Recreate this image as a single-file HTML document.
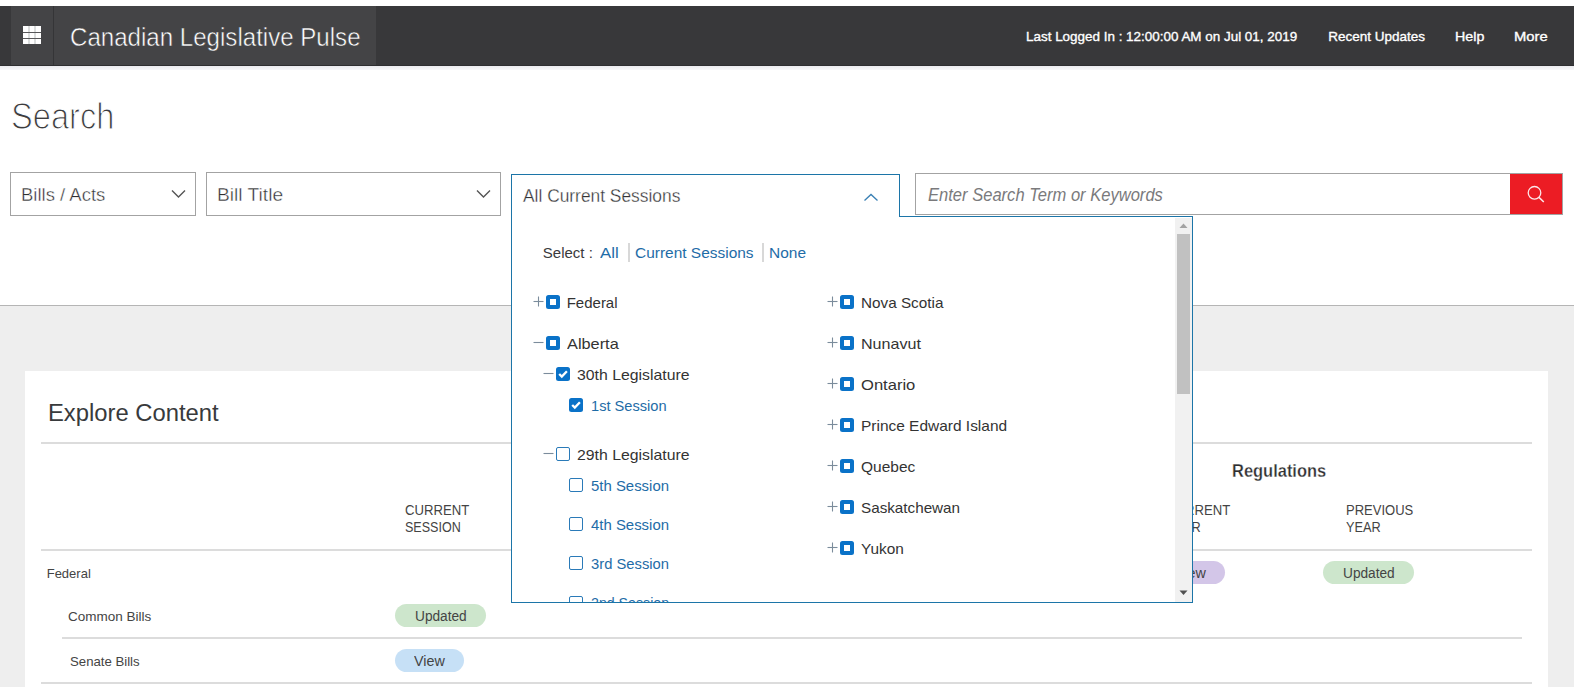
<!DOCTYPE html>
<html><head><meta charset="utf-8"><style>
html,body{margin:0;padding:0;}
body{width:1574px;height:687px;position:relative;overflow:hidden;background:#fff;font-family:"Liberation Sans",sans-serif;}
.t{position:absolute;white-space:nowrap;}
.b{position:absolute;}
</style></head><body>
<div class="b" style="left:0px;top:6px;width:1574px;height:60px;background:#38383a"></div>
<div class="b" style="left:11px;top:6px;width:42px;height:60px;background:#444446"></div>
<div class="b" style="left:53px;top:6px;width:1px;height:60px;background:#353537"></div>
<div class="b" style="left:54px;top:6px;width:322px;height:60px;background:#444446"></div>
<div class="b" style="left:0px;top:65px;width:1574px;height:1px;background:#2f2f31"></div>
<div class="b" style="left:0px;top:66px;width:1574px;height:4px;background:linear-gradient(#ebebef,#f8f8fa)"></div>
<svg class="b" style="left:23px;top:26px" width="18" height="18" viewBox="0 0 18 18"><rect width="18" height="18" fill="#fff"/><rect x="5.5" y="0" width="1" height="18" fill="#b9bdbd"/><rect x="11.5" y="0" width="1" height="18" fill="#b9bdbd"/><rect x="0" y="6" width="18" height="1" fill="#58585a"/><rect x="0" y="12" width="18" height="1" fill="#58585a"/></svg>
<div class="t" style="left:69.80px;top:22.43px;font-size:25px;line-height:30px;color:#fff;font-weight:normal;font-style:normal;transform:scaleX(0.9634);transform-origin:0.00px 0;-webkit-text-stroke:0.5px #444446;">Canadian Legislative Pulse</div>
<div class="t" style="left:1025.50px;top:29.42px;font-size:13.5px;line-height:16px;color:#fff;font-weight:normal;font-style:normal;transform:scaleX(0.9952);transform-origin:0.00px 0;-webkit-text-stroke:0.35px #fff;">Last Logged In : 12:00:00 AM on Jul 01, 2019</div>
<div class="t" style="left:1328.20px;top:29.42px;font-size:13.5px;line-height:16px;color:#fff;font-weight:normal;font-style:normal;-webkit-text-stroke:0.35px #fff;">Recent Updates</div>
<div class="t" style="left:1455.00px;top:29.42px;font-size:13.5px;line-height:16px;color:#fff;font-weight:normal;font-style:normal;transform:scaleX(1.0559);transform-origin:0.00px 0;-webkit-text-stroke:0.35px #fff;">Help</div>
<div class="t" style="left:1514.20px;top:29.42px;font-size:13.5px;line-height:16px;color:#fff;font-weight:normal;font-style:normal;transform:scaleX(1.0927);transform-origin:0.00px 0;-webkit-text-stroke:0.35px #fff;">More</div>
<div class="t" style="left:11.00px;top:95.12px;font-size:36px;line-height:43px;color:#3c3c3e;font-weight:normal;font-style:normal;transform:scaleX(0.9060);transform-origin:0.00px 0;-webkit-text-stroke:1.1px #fff;">Search</div>
<div class="b" style="left:10px;top:172px;width:186px;height:44px;border:1px solid #a3a3a3;box-sizing:border-box;background:#fff"></div>
<div class="t" style="left:20.60px;top:183.86px;font-size:18px;line-height:22px;color:#2e2e30;font-weight:normal;font-style:normal;transform:scaleX(1.0280);transform-origin:0.00px 0;-webkit-text-stroke:0.4px #fff;">Bills / Acts</div>
<svg class="b" style="left:171px;top:189px" width="16" height="10" viewBox="0 0 16 10"><polyline points="1,1.5 7.5,8 14,1.5" fill="none" stroke="#555" stroke-width="1.4"/></svg>
<div class="b" style="left:206px;top:172px;width:295px;height:44px;border:1px solid #a3a3a3;box-sizing:border-box;background:#fff"></div>
<div class="t" style="left:217.00px;top:183.86px;font-size:18px;line-height:22px;color:#2e2e30;font-weight:normal;font-style:normal;transform:scaleX(1.0661);transform-origin:0.00px 0;-webkit-text-stroke:0.4px #fff;">Bill Title</div>
<svg class="b" style="left:476px;top:189px" width="16" height="10" viewBox="0 0 16 10"><polyline points="1,1.5 7.5,8 14,1.5" fill="none" stroke="#555" stroke-width="1.4"/></svg>
<div class="b" style="left:915px;top:173px;width:648px;height:42px;border:1px solid #a3a3a3;box-sizing:border-box;background:#fff"></div>
<div class="t" style="left:927.90px;top:184.53px;font-size:17.5px;line-height:21px;color:#7a7a7c;font-weight:normal;font-style:italic;transform:scaleX(0.9457);transform-origin:0.00px 0;">Enter Search Term or Keywords</div>
<div class="b" style="left:1510px;top:173px;width:53px;height:42px;background:#ec1c24;border:1px solid #a3a3a3;border-left:none;box-sizing:border-box"></div>
<svg class="b" style="left:1522px;top:181px" width="28" height="28" viewBox="0 0 28 28"><circle cx="12.5" cy="11.8" r="6.3" fill="none" stroke="#fde8ea" stroke-width="1.3"/><line x1="17" y1="16.4" x2="21.8" y2="21" stroke="#fde8ea" stroke-width="1.5"/></svg>
<div class="b" style="left:0px;top:305px;width:1574px;height:1px;background:#b5b5b5"></div>
<div class="b" style="left:0px;top:306px;width:1574px;height:381px;background:#eeeeee"></div>
<div class="b" style="left:25px;top:371px;width:1523px;height:316px;background:#fff"></div>
<div class="t" style="left:47.50px;top:399.13px;font-size:23px;line-height:28px;color:#383a3c;font-weight:normal;font-style:normal;transform:scaleX(1.0347);transform-origin:0.00px 0;">Explore Content</div>
<div class="b" style="left:41px;top:442px;width:1491px;height:2px;background:#dcdcdc"></div>
<div class="t" style="left:1231.50px;top:459.69px;font-size:18.5px;line-height:22px;color:#2e2e30;font-weight:bold;font-style:normal;transform:scaleX(0.8897);transform-origin:0.00px 0;-webkit-text-stroke:0.3px #fff;">Regulations</div>
<div class="t" style="left:405.20px;top:501.75px;font-size:14px;line-height:17px;color:#444;font-weight:normal;font-style:normal;transform:scaleX(0.9387);transform-origin:0.00px 0;">CURRENT</div>
<div class="t" style="left:405.20px;top:518.75px;font-size:14px;line-height:17px;color:#444;font-weight:normal;font-style:normal;transform:scaleX(0.8948);transform-origin:0.00px 0;">SESSION</div>
<div class="t" style="left:1165.70px;top:501.75px;font-size:14px;line-height:17px;color:#444;font-weight:normal;font-style:normal;transform:scaleX(0.9387);transform-origin:0.00px 0;">CURRENT</div>
<div class="t" style="left:1165.80px;top:518.75px;font-size:14px;line-height:17px;color:#444;font-weight:normal;font-style:normal;transform:scaleX(0.9102);transform-origin:0.00px 0;">YEAR</div>
<div class="t" style="left:1345.70px;top:501.75px;font-size:14px;line-height:17px;color:#444;font-weight:normal;font-style:normal;transform:scaleX(0.9299);transform-origin:0.00px 0;">PREVIOUS</div>
<div class="t" style="left:1345.70px;top:518.75px;font-size:14px;line-height:17px;color:#444;font-weight:normal;font-style:normal;transform:scaleX(0.9102);transform-origin:0.00px 0;">YEAR</div>
<div class="b" style="left:41px;top:549px;width:1491px;height:2px;background:#dcdcdc"></div>
<div class="t" style="left:46.70px;top:565.59px;font-size:13px;line-height:16px;color:#444;font-weight:normal;font-style:normal;">Federal</div>
<div class="b" style="left:1156px;top:561px;width:69px;height:23px;background:#d3c6e8;border-radius:12px"></div>
<div class="t" style="left:1175.40px;top:564.75px;font-size:14px;line-height:17px;color:#444;font-weight:normal;font-style:normal;transform:scaleX(1.0248);transform-origin:0.00px 0;">View</div>
<div class="b" style="left:1323px;top:561px;width:91px;height:23px;background:#cde6cc;border-radius:12px"></div>
<div class="t" style="left:1342.50px;top:564.75px;font-size:14px;line-height:17px;color:#444;font-weight:normal;font-style:normal;transform:scaleX(0.9774);transform-origin:0.00px 0;">Updated</div>
<div class="t" style="left:67.60px;top:608.59px;font-size:13px;line-height:16px;color:#444;font-weight:normal;font-style:normal;transform:scaleX(1.0393);transform-origin:0.00px 0;">Common Bills</div>
<div class="b" style="left:395px;top:604px;width:91px;height:23px;background:#cde6cc;border-radius:12px"></div>
<div class="t" style="left:414.60px;top:607.75px;font-size:14px;line-height:17px;color:#444;font-weight:normal;font-style:normal;transform:scaleX(0.9774);transform-origin:0.00px 0;">Updated</div>
<div class="b" style="left:62px;top:637px;width:1460px;height:2px;background:#dcdcdc"></div>
<div class="t" style="left:69.60px;top:653.59px;font-size:13px;line-height:16px;color:#444;font-weight:normal;font-style:normal;transform:scaleX(1.0142);transform-origin:0.00px 0;">Senate Bills</div>
<div class="b" style="left:395px;top:649px;width:69px;height:23px;background:#c6e0f6;border-radius:12px"></div>
<div class="t" style="left:414.40px;top:652.75px;font-size:14px;line-height:17px;color:#444;font-weight:normal;font-style:normal;transform:scaleX(1.0248);transform-origin:0.00px 0;">View</div>
<div class="b" style="left:41px;top:682px;width:1491px;height:2px;background:#dcdcdc"></div>
<div class="b" style="left:511px;top:174px;width:389px;height:44px;background:#fff;border:1px solid #1c75a8;border-bottom:none;box-sizing:border-box"></div>
<div class="t" style="left:522.90px;top:185.53px;font-size:17.5px;line-height:21px;color:#333335;font-weight:normal;font-style:normal;transform:scaleX(0.9924);transform-origin:0.00px 0;-webkit-text-stroke:0.3px #fff;">All Current Sessions</div>
<svg class="b" style="left:863px;top:192px" width="16" height="11" viewBox="0 0 16 11"><polyline points="1.5,8.5 8,2.5 14.5,8.5" fill="none" stroke="#3a80b4" stroke-width="1.35"/></svg>
<div class="b" style="left:511px;top:217px;width:682px;height:386px;background:#fff;border:1px solid #1c75a8;border-top:none;box-sizing:border-box;overflow:hidden"></div>
<div class="b" style="left:900px;top:216px;width:293px;height:1px;background:#1c75a8"></div>
<div class="b" style="left:1175px;top:218px;width:17px;height:384px;background:#f1f1f1"></div>
<div class="b" style="left:1177px;top:234px;width:13px;height:160px;background:#c1c1c1"></div>
<svg class="b" style="left:1178px;top:222px" width="11" height="7" viewBox="0 0 11 7"><polygon points="1.5,6 5.5,1.5 9.5,6" fill="#a3a3a3"/></svg>
<svg class="b" style="left:1178px;top:589px" width="11" height="7" viewBox="0 0 11 7"><polygon points="1.5,1.5 9.5,1.5 5.5,6" fill="#505050"/></svg>
<div class="t" style="left:542.80px;top:243.90px;font-size:15px;line-height:18px;color:#3a3a3c;font-weight:normal;font-style:normal;">Select :</div>
<div class="t" style="left:600.40px;top:243.90px;font-size:15px;line-height:18px;color:#1e6ca7;font-weight:normal;font-style:normal;transform:scaleX(1.1188);transform-origin:0.00px 0;">All</div>
<div class="b" style="left:628px;top:243px;width:2px;height:19px;background:#d8d8d8"></div>
<div class="t" style="left:634.80px;top:243.90px;font-size:15px;line-height:18px;color:#1e6ca7;font-weight:normal;font-style:normal;transform:scaleX(1.0304);transform-origin:0.00px 0;">Current Sessions</div>
<div class="b" style="left:762px;top:243px;width:2px;height:19px;background:#d8d8d8"></div>
<div class="t" style="left:769.10px;top:243.90px;font-size:15px;line-height:18px;color:#1e6ca7;font-weight:normal;font-style:normal;transform:scaleX(1.0314);transform-origin:0.00px 0;">None</div>
<svg class="b" style="left:533px;top:296px" width="11" height="11" viewBox="0 0 11 11"><line x1="0.5" y1="5.5" x2="10.5" y2="5.5" stroke="#7b8c9c" stroke-width="1.1"/><line x1="5.5" y1="0.5" x2="5.5" y2="10.5" stroke="#7b8c9c" stroke-width="1.1"/></svg>
<div class="b" style="left:546px;top:295px;width:14px;height:14px;background:#fff;border:4px solid #0a72c8;border-radius:2.5px;box-sizing:border-box"></div>
<div class="t" style="left:566.70px;top:293.90px;font-size:15px;line-height:18px;color:#333;font-weight:normal;font-style:normal;">Federal</div>
<svg class="b" style="left:533px;top:337px" width="11" height="11" viewBox="0 0 11 11"><line x1="0.5" y1="5.5" x2="10.5" y2="5.5" stroke="#7b8c9c" stroke-width="1.1"/></svg>
<div class="b" style="left:546px;top:336px;width:14px;height:14px;background:#fff;border:4px solid #0a72c8;border-radius:2.5px;box-sizing:border-box"></div>
<div class="t" style="left:566.80px;top:334.90px;font-size:15px;line-height:18px;color:#333;font-weight:normal;font-style:normal;transform:scaleX(1.0884);transform-origin:0.00px 0;">Alberta</div>
<svg class="b" style="left:543px;top:368px" width="11" height="11" viewBox="0 0 11 11"><line x1="0.5" y1="5.5" x2="10.5" y2="5.5" stroke="#7b8c9c" stroke-width="1.1"/></svg>
<svg class="b" style="left:556px;top:367px" width="14" height="14" viewBox="0 0 14 14"><rect width="14" height="14" rx="2.5" fill="#0a72c8"/><polyline points="3.2,7.0 5.8,9.6 10.9,4.2" fill="none" stroke="#fff" stroke-width="2.3"/></svg>
<div class="t" style="left:577.20px;top:365.90px;font-size:15px;line-height:18px;color:#333;font-weight:normal;font-style:normal;transform:scaleX(1.0539);transform-origin:0.00px 0;">30th Legislature</div>
<svg class="b" style="left:569px;top:398px" width="14" height="14" viewBox="0 0 14 14"><rect width="14" height="14" rx="2.5" fill="#0a72c8"/><polyline points="3.2,7.0 5.8,9.6 10.9,4.2" fill="none" stroke="#fff" stroke-width="2.3"/></svg>
<div class="t" style="left:591.20px;top:396.90px;font-size:15px;line-height:18px;color:#1e6ca7;font-weight:normal;font-style:normal;transform:scaleX(0.9742);transform-origin:0.00px 0;">1st Session</div>
<svg class="b" style="left:543px;top:448px" width="11" height="11" viewBox="0 0 11 11"><line x1="0.5" y1="5.5" x2="10.5" y2="5.5" stroke="#7b8c9c" stroke-width="1.1"/></svg>
<div class="b" style="left:556px;top:447px;width:14px;height:14px;background:#fff;border:1.5px solid #2a7ab8;border-radius:2px;box-sizing:border-box"></div>
<div class="t" style="left:577.20px;top:445.90px;font-size:15px;line-height:18px;color:#333;font-weight:normal;font-style:normal;transform:scaleX(1.0539);transform-origin:0.00px 0;">29th Legislature</div>
<div class="b" style="left:569px;top:478px;width:14px;height:14px;background:#fff;border:1.5px solid #2a7ab8;border-radius:2px;box-sizing:border-box"></div>
<div class="t" style="left:590.50px;top:476.90px;font-size:15px;line-height:18px;color:#1e6ca7;font-weight:normal;font-style:normal;transform:scaleX(0.9952);transform-origin:0.00px 0;">5th Session</div>
<div class="b" style="left:569px;top:517px;width:14px;height:14px;background:#fff;border:1.5px solid #2a7ab8;border-radius:2px;box-sizing:border-box"></div>
<div class="t" style="left:590.50px;top:515.90px;font-size:15px;line-height:18px;color:#1e6ca7;font-weight:normal;font-style:normal;transform:scaleX(0.9952);transform-origin:0.00px 0;">4th Session</div>
<div class="b" style="left:569px;top:556px;width:14px;height:14px;background:#fff;border:1.5px solid #2a7ab8;border-radius:2px;box-sizing:border-box"></div>
<div class="t" style="left:590.50px;top:554.90px;font-size:15px;line-height:18px;color:#1e6ca7;font-weight:normal;font-style:normal;transform:scaleX(0.9842);transform-origin:0.00px 0;">3rd Session</div>
<div class="b" style="left:512px;top:590px;width:660px;height:12px;overflow:hidden">
<div class="b" style="left:57px;top:6px;width:14px;height:14px;background:#fff;border:1.5px solid #2a7ab8;border-radius:2px;box-sizing:border-box"></div>
<div class="t" style="left:78.50px;top:3.90px;font-size:15px;line-height:18px;color:#1e6ca7;font-weight:normal;font-style:normal;transform:scaleX(0.9455);transform-origin:0.00px 0;">2nd Session</div>
</div>
<svg class="b" style="left:827px;top:296px" width="11" height="11" viewBox="0 0 11 11"><line x1="0.5" y1="5.5" x2="10.5" y2="5.5" stroke="#7b8c9c" stroke-width="1.1"/><line x1="5.5" y1="0.5" x2="5.5" y2="10.5" stroke="#7b8c9c" stroke-width="1.1"/></svg>
<div class="b" style="left:840px;top:295px;width:14px;height:14px;background:#fff;border:4px solid #0a72c8;border-radius:2.5px;box-sizing:border-box"></div>
<div class="t" style="left:861.00px;top:293.90px;font-size:15px;line-height:18px;color:#333;font-weight:normal;font-style:normal;transform:scaleX(1.0189);transform-origin:0.00px 0;">Nova Scotia</div>
<svg class="b" style="left:827px;top:337px" width="11" height="11" viewBox="0 0 11 11"><line x1="0.5" y1="5.5" x2="10.5" y2="5.5" stroke="#7b8c9c" stroke-width="1.1"/><line x1="5.5" y1="0.5" x2="5.5" y2="10.5" stroke="#7b8c9c" stroke-width="1.1"/></svg>
<div class="b" style="left:840px;top:336px;width:14px;height:14px;background:#fff;border:4px solid #0a72c8;border-radius:2.5px;box-sizing:border-box"></div>
<div class="t" style="left:861.00px;top:334.90px;font-size:15px;line-height:18px;color:#333;font-weight:normal;font-style:normal;transform:scaleX(1.0720);transform-origin:0.00px 0;">Nunavut</div>
<svg class="b" style="left:827px;top:378px" width="11" height="11" viewBox="0 0 11 11"><line x1="0.5" y1="5.5" x2="10.5" y2="5.5" stroke="#7b8c9c" stroke-width="1.1"/><line x1="5.5" y1="0.5" x2="5.5" y2="10.5" stroke="#7b8c9c" stroke-width="1.1"/></svg>
<div class="b" style="left:840px;top:377px;width:14px;height:14px;background:#fff;border:4px solid #0a72c8;border-radius:2.5px;box-sizing:border-box"></div>
<div class="t" style="left:861.00px;top:375.90px;font-size:15px;line-height:18px;color:#333;font-weight:normal;font-style:normal;transform:scaleX(1.1046);transform-origin:0.00px 0;">Ontario</div>
<svg class="b" style="left:827px;top:419px" width="11" height="11" viewBox="0 0 11 11"><line x1="0.5" y1="5.5" x2="10.5" y2="5.5" stroke="#7b8c9c" stroke-width="1.1"/><line x1="5.5" y1="0.5" x2="5.5" y2="10.5" stroke="#7b8c9c" stroke-width="1.1"/></svg>
<div class="b" style="left:840px;top:418px;width:14px;height:14px;background:#fff;border:4px solid #0a72c8;border-radius:2.5px;box-sizing:border-box"></div>
<div class="t" style="left:861.00px;top:416.90px;font-size:15px;line-height:18px;color:#333;font-weight:normal;font-style:normal;transform:scaleX(1.0307);transform-origin:0.00px 0;">Prince Edward Island</div>
<svg class="b" style="left:827px;top:460px" width="11" height="11" viewBox="0 0 11 11"><line x1="0.5" y1="5.5" x2="10.5" y2="5.5" stroke="#7b8c9c" stroke-width="1.1"/><line x1="5.5" y1="0.5" x2="5.5" y2="10.5" stroke="#7b8c9c" stroke-width="1.1"/></svg>
<div class="b" style="left:840px;top:459px;width:14px;height:14px;background:#fff;border:4px solid #0a72c8;border-radius:2.5px;box-sizing:border-box"></div>
<div class="t" style="left:861.00px;top:457.90px;font-size:15px;line-height:18px;color:#333;font-weight:normal;font-style:normal;transform:scaleX(1.0324);transform-origin:0.00px 0;">Quebec</div>
<svg class="b" style="left:827px;top:501px" width="11" height="11" viewBox="0 0 11 11"><line x1="0.5" y1="5.5" x2="10.5" y2="5.5" stroke="#7b8c9c" stroke-width="1.1"/><line x1="5.5" y1="0.5" x2="5.5" y2="10.5" stroke="#7b8c9c" stroke-width="1.1"/></svg>
<div class="b" style="left:840px;top:500px;width:14px;height:14px;background:#fff;border:4px solid #0a72c8;border-radius:2.5px;box-sizing:border-box"></div>
<div class="t" style="left:861.00px;top:498.90px;font-size:15px;line-height:18px;color:#333;font-weight:normal;font-style:normal;transform:scaleX(1.0154);transform-origin:0.00px 0;">Saskatchewan</div>
<svg class="b" style="left:827px;top:542px" width="11" height="11" viewBox="0 0 11 11"><line x1="0.5" y1="5.5" x2="10.5" y2="5.5" stroke="#7b8c9c" stroke-width="1.1"/><line x1="5.5" y1="0.5" x2="5.5" y2="10.5" stroke="#7b8c9c" stroke-width="1.1"/></svg>
<div class="b" style="left:840px;top:541px;width:14px;height:14px;background:#fff;border:4px solid #0a72c8;border-radius:2.5px;box-sizing:border-box"></div>
<div class="t" style="left:861.00px;top:539.90px;font-size:15px;line-height:18px;color:#333;font-weight:normal;font-style:normal;transform:scaleX(1.0251);transform-origin:0.00px 0;">Yukon</div>
</body></html>
